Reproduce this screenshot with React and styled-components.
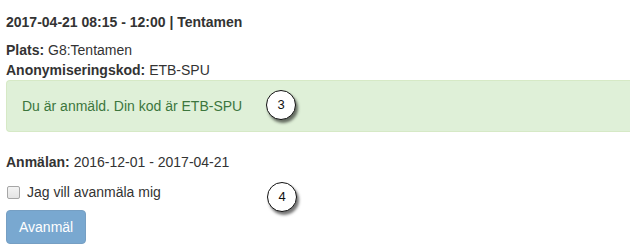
import React, { useState } from 'react';
import styled, { createGlobalStyle } from 'styled-components';

const GlobalStyle = createGlobalStyle`
    html, body {
        margin: 0;
        padding: 0;
        background: #fff;
        overflow: hidden;
    }
    body {
        font-family: "Liberation Sans", Arial, sans-serif;
        font-size: 14px;
        line-height: 20px;
        color: #333;
    }
`

const Container = styled.div`
    position: relative;
    width: 640px;
    padding: 12px 0 0 6px;
    box-sizing: border-box;
`

const Heading = styled.h4`
    margin: 0 0 8px;
    font-size: 14px;
    font-weight: bold;
    line-height: 20px;
`

const InfoLine = styled.div`
    & b {
        font-weight: bold;
    }
`

const Alert = styled.div`
    padding: 15px;
    margin-bottom: 20px;
    border: 1px solid #d6e9c6;
    border-right: none;
    border-radius: 4px 0 0 4px;
    background: #dff0d8;
    color: #3c763d;
`

// numbered callouts laid over the form
const Marker = styled.div`
    position: absolute;
    left: ${p => p.$x}px;
    top: ${p => p.$y}px;
    width: 28px;
    height: 28px;
    border: 1.5px solid #111;
    border-radius: 50%;
    background: #fff;
    box-shadow: 2px 3px 3px rgba(0, 0, 0, 0.55);
    display: flex;
    align-items: center;
    justify-content: center;
    font-size: 13px;
    color: #111;
`

const CheckRow = styled.label`
    display: flex;
    align-items: center;
    gap: 7px;
    margin: 10px 0 8px 1px;
    cursor: pointer;
`

const Box = styled.span`
    width: 11px;
    height: 11px;
    border: 1px solid #a6a6a6;
    border-radius: 2px;
    background: ${p => p.$checked ? '#337ab7' : 'linear-gradient(#f4f4f4, #e4e4e4)'};
`

const Button = styled.button`
    display: block;
    padding: 6px 12px;
    font-family: inherit;
    font-size: 14px;
    line-height: 20px;
    color: #fff;
    background: #337ab7;
    border: 1px solid #2e6da4;
    border-radius: 4px;
    opacity: ${p => p.disabled ? 0.65 : 1};
    cursor: ${p => p.disabled ? 'not-allowed' : 'pointer'};
`

export default function App() {
    const [checked, setChecked] = useState(false);

    return (
        <Container>
            <GlobalStyle />
            <Heading>2017-04-21 08:15 - 12:00 | Tentamen</Heading>
            <InfoLine><b>Plats:</b> G8:Tentamen</InfoLine>
            <InfoLine><b>Anonymiseringskod:</b> ETB-SPU</InfoLine>
            <Alert>Du är anmäld. Din kod är ETB-SPU</Alert>
            <InfoLine><b>Anmälan:</b> 2016-12-01 - 2017-04-21</InfoLine>
            <CheckRow onClick={() => setChecked(!checked)}>
                <Box $checked={checked} />
                Jag vill avanmäla mig
            </CheckRow>
            <Button disabled={!checked}>Avanmäl</Button>
            <Marker $x={266} $y={90}>3</Marker>
            <Marker $x={267} $y={182}>4</Marker>
        </Container>
    )
}
